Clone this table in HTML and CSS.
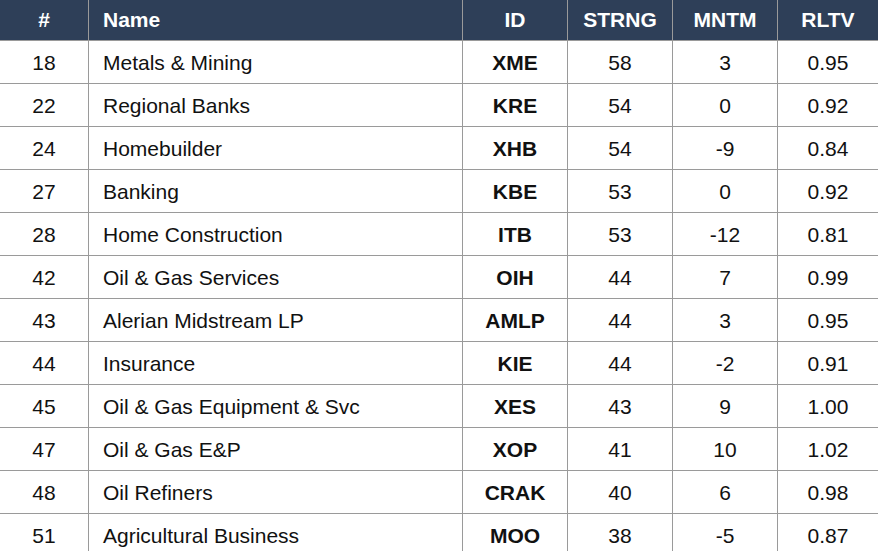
FILE: index.html
```html
<!DOCTYPE html>
<html>
<head>
<meta charset="utf-8">
<link rel="stylesheet" href="styles.css">
</head>
<body>
<table class="grid">
<thead>
<tr><th class="c-num">#</th><th class="c-name">Name</th><th class="c-id">ID</th><th class="c-s">STRNG</th><th class="c-m">MNTM</th><th class="c-r">RLTV</th></tr>
</thead>
<tbody>
<tr><td>18</td><td class="name">Metals &amp; Mining</td><td class="id">XME</td><td>58</td><td>3</td><td>0.95</td></tr>
<tr><td>22</td><td class="name">Regional Banks</td><td class="id">KRE</td><td>54</td><td>0</td><td>0.92</td></tr>
<tr><td>24</td><td class="name">Homebuilder</td><td class="id">XHB</td><td>54</td><td>-9</td><td>0.84</td></tr>
<tr><td>27</td><td class="name">Banking</td><td class="id">KBE</td><td>53</td><td>0</td><td>0.92</td></tr>
<tr><td>28</td><td class="name">Home Construction</td><td class="id">ITB</td><td>53</td><td>-12</td><td>0.81</td></tr>
<tr><td>42</td><td class="name">Oil &amp; Gas Services</td><td class="id">OIH</td><td>44</td><td>7</td><td>0.99</td></tr>
<tr><td>43</td><td class="name">Alerian Midstream LP</td><td class="id">AMLP</td><td>44</td><td>3</td><td>0.95</td></tr>
<tr><td>44</td><td class="name">Insurance</td><td class="id">KIE</td><td>44</td><td>-2</td><td>0.91</td></tr>
<tr><td>45</td><td class="name">Oil &amp; Gas Equipment &amp; Svc</td><td class="id">XES</td><td>43</td><td>9</td><td>1.00</td></tr>
<tr><td>47</td><td class="name">Oil &amp; Gas E&amp;P</td><td class="id">XOP</td><td>41</td><td>10</td><td>1.02</td></tr>
<tr><td>48</td><td class="name">Oil Refiners</td><td class="id">CRAK</td><td>40</td><td>6</td><td>0.98</td></tr>
<tr><td>51</td><td class="name">Agricultural Business</td><td class="id">MOO</td><td>38</td><td>-5</td><td>0.87</td></tr>
</tbody>
</table>
</body>
</html>
```
FILE: styles.css
```css
html, body { margin: 0; padding: 0; background: #fff; }
body { font-family: "Liberation Sans", Arial, sans-serif; color: #111; overflow: hidden; }
.grid { width: 878px; border-collapse: collapse; table-layout: fixed; font-size: 21px; }
.grid th { background: #2e3f58; color: #fff; font-weight: bold; height: 40px; padding: 0; text-align: center; border-left: 1px solid #9a9a9a; border-bottom: 1px solid #9a9a9a; }
.grid td { height: 41px; padding: 1px 0 0 0; text-align: center; border-left: 1px solid #9a9a9a; border-bottom: 1px solid #9a9a9a; }
.grid th:first-child, .grid td:first-child { border-left: none; }
.grid th.c-name, .grid td.name { text-align: left; padding-left: 14px; }
.grid td.id { font-weight: bold; }
.c-num { width: 88px; }
.c-name { width: 359px; }
.c-id { width: 104px; }
.c-s { width: 104px; }
.c-m { width: 104px; }
.c-r { width: auto; }
```
